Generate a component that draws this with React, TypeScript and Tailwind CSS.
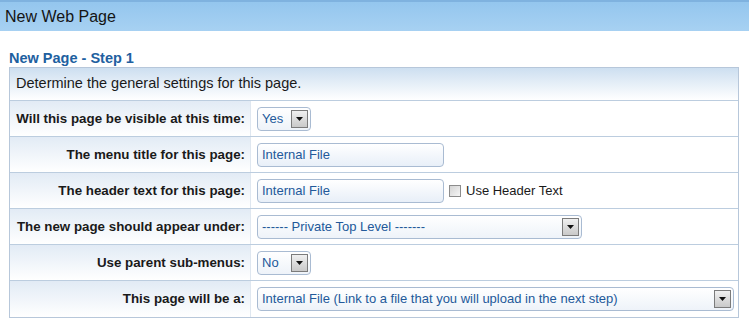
import React from 'react';

const font = { fontFamily: '"Liberation Sans", Arial, sans-serif' };

const Arrow: React.FC = () => (
  <span className="flex h-[18px] w-[17px] items-center justify-center border border-[#7b7b7b] bg-gradient-to-b from-[#f0f0f0] to-[#c9c9c9]">
    <svg width="7" height="4" viewBox="0 0 7 4">
      <path d="M0 0h7L3.5 4z" fill="#111" />
    </svg>
  </span>
);

const Select: React.FC<{ value: string; width: string }> = ({ value, width }) => (
  <div
    className={`flex h-[24px] items-center justify-between rounded-[4px] border border-[#a9bbd2] bg-gradient-to-b from-white to-[#eef3f9] pl-[4px] pr-[2px] text-[13px] text-[#23599a] ${width}`}
  >
    <span className="whitespace-nowrap">{value}</span>
    <Arrow />
  </div>
);

const Input: React.FC<{ value: string }> = ({ value }) => (
  <div className="flex h-[24px] w-[187px] items-center rounded-[4px] border border-[#a9bbd2] bg-gradient-to-b from-white to-[#e8eff8] pl-[4px] text-[13px] text-[#23599a]">
    {value}
  </div>
);

const Row: React.FC<{ label: string; children: React.ReactNode; last?: boolean }> = ({ label, children, last }) => (
  <div className={`flex h-[36px] ${last ? '' : 'border-b border-[#bccddf]'}`}>
    <div className="flex w-[241px] shrink-0 items-center justify-end border-r border-[#dfe7f0] bg-gradient-to-b from-[#e2ebf5] to-white pr-[5px] text-[13.33px] font-bold text-[#1a1a1a]">
      {label}
    </div>
    <div className="flex flex-1 items-center gap-[5px] bg-white pl-[6px]">{children}</div>
  </div>
);

export default function App() {
  return (
    <div className="h-[327px] w-[749px] bg-white" style={font}>
      <div className="flex h-[31px] items-center border-t-2 border-[#7fb2df] bg-gradient-to-b from-[#94c6ee] to-[#a7d1f2] pl-[5px] text-[16px] text-[#141414]">
        New Web Page
      </div>
      <div className="pl-[9px] pt-[19px] text-[14.5px] font-bold leading-[17px] text-[#21609f]">New Page - Step 1</div>
      <div className="ml-[9px] w-[730px] border border-[#b7c7da]">
        <div className="flex h-[33px] items-center border-b border-[#bccddf] bg-gradient-to-b from-[#cddff0] to-white pl-[6px] text-[14.5px] text-[#1a1a1a]">
          Determine the general settings for this page.
        </div>
        <Row label="Will this page be visible at this time:">
          <Select value="Yes" width="w-[54px]" />
        </Row>
        <Row label="The menu title for this page:">
          <Input value="Internal File" />
        </Row>
        <Row label="The header text for this page:">
          <Input value="Internal File" />
          <span className="h-[12px] w-[12px] border border-[#8c8c8c] bg-gradient-to-br from-[#d4d4d4] to-[#f6f6f6]" />
          <span className="text-[13px] text-[#1a1a1a]">Use Header Text</span>
        </Row>
        <Row label="The new page should appear under:">
          <Select value="------ Private Top Level -------" width="w-[325px]" />
        </Row>
        <Row label="Use parent sub-menus:">
          <Select value="No" width="w-[54px]" />
        </Row>
        <Row label="This page will be a:" last>
          <Select value="Internal File (Link to a file that you will upload in the next step)" width="w-[477px]" />
        </Row>
      </div>
    </div>
  );
}
